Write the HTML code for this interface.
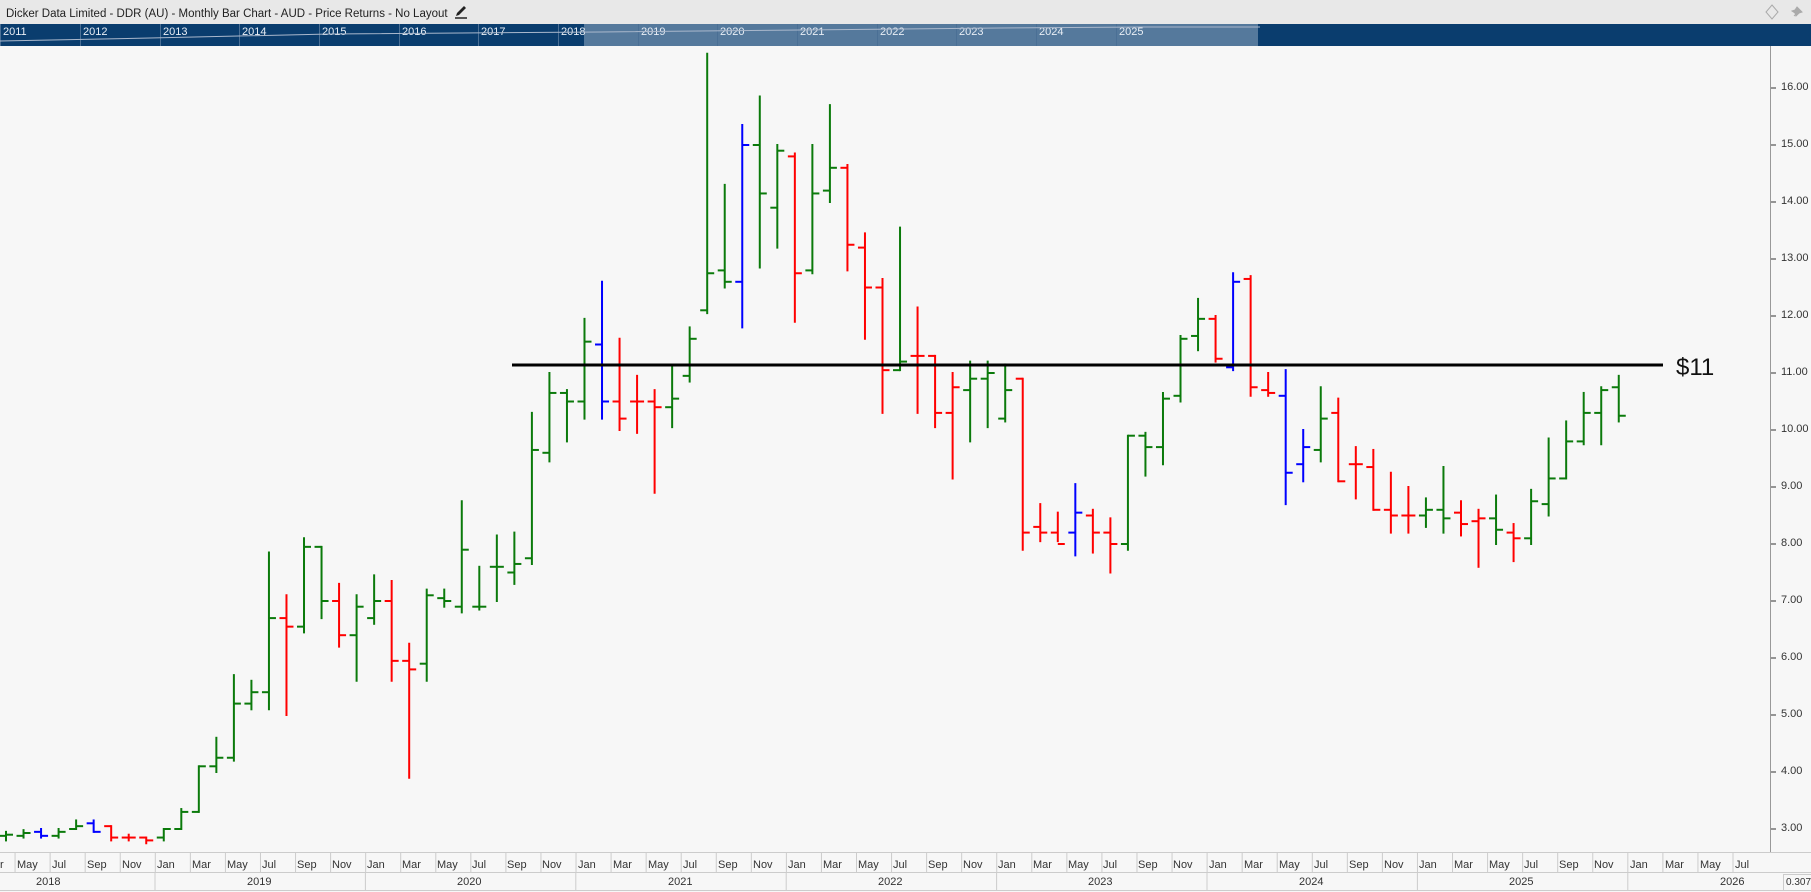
<!DOCTYPE html>
<html><head><meta charset="utf-8"><style>
body{margin:0;width:1811px;height:892px;overflow:hidden;background:#f7f7f7;font-family:"Liberation Sans",sans-serif;}
#title{position:absolute;left:0;top:0;width:1811px;height:24px;background:#e8e8e8;font-size:11.5px;color:#222;}
#title span{position:absolute;left:6px;top:5px;}
#nav{position:absolute;left:0;top:24px;width:1811px;height:22px;background:#0a3d6e;overflow:hidden}
.ny{position:absolute;top:0;height:22px;border-left:1px solid #4a6f95;color:#e8eef5;font-size:11px;padding-left:2px;line-height:16px}
.lab{position:absolute;font-size:11px;color:#333}
.pl{position:absolute;left:1781px;font-size:11px;color:#333}
</style></head><body>
<div id="title"><span>Dicker Data Limited - DDR (AU) - Monthly Bar Chart - AUD - Price Returns - No Layout &nbsp;<svg width="14" height="14" viewBox="0 0 14 14" style="vertical-align:-2px"><path d="M2 11 L3 8 L10 1 L12 3 L5 10 Z" fill="#222"/><path d="M1 13 H13" stroke="#222" stroke-width="1.5"/></svg></span>
<svg style="position:absolute;left:1764px;top:4px" width="44" height="16"><path d="M8 1 L14 8 L8 15 L2 8 Z" fill="none" stroke="#aaa"/><path d="M30 12 L34 8 M33 3 L38 8 L35 9 L32 12 L31 9 L28 7 L31 6 Z" fill="#aaa" stroke="#aaa"/></svg></div>
<div id="nav">
<div style="position:absolute;left:584px;top:0;width:674px;height:22px;background:#55799c"></div>
<div class="ny" style="left:0">2011</div><div class="ny" style="left:80px">2012</div><div class="ny" style="left:160px">2013</div><div class="ny" style="left:239px">2014</div><div class="ny" style="left:319px">2015</div><div class="ny" style="left:399px">2016</div><div class="ny" style="left:478px">2017</div><div class="ny" style="left:558px">2018</div><div class="ny" style="left:638px">2019</div><div class="ny" style="left:717px">2020</div><div class="ny" style="left:797px">2021</div><div class="ny" style="left:877px">2022</div><div class="ny" style="left:956px">2023</div><div class="ny" style="left:1036px">2024</div><div class="ny" style="left:1116px">2025</div>
<svg style="position:absolute;left:0;top:0" width="1260" height="22"><polyline points="0,17 150,14 330,10 600,8 800,6 1000,4 1150,3 1260,3" fill="none" stroke="#aab8cc" stroke-width="1"/></svg>
</div>
<svg id="ch" style="position:absolute;left:0;top:0" width="1811" height="892"></svg>
<div style="position:absolute;left:1770px;top:46px;width:1px;height:806px;background:#999"></div>
<div style="position:absolute;left:0;top:852px;width:1770px;height:1px;background:#ccc"></div>
<div style="position:absolute;left:0;top:872px;width:1811px;height:1px;background:#ccc"></div>
<div style="position:absolute;left:0;top:890px;width:1811px;height:1px;background:#ccc"></div>
<div style="position:absolute;left:1770px;top:852px;width:41px;height:1px;background:#ccc"></div>
<div style="position:absolute;left:1783px;top:874px;width:30px;height:15px;border:1px solid #ccc;font-size:10px;color:#333;line-height:15px;padding-left:2px">0.307</div>
<div class="pl" style="top:81px">16.00</div><div class="pl" style="top:138px">15.00</div><div class="pl" style="top:195px">14.00</div><div class="pl" style="top:252px">13.00</div><div class="pl" style="top:309px">12.00</div><div class="pl" style="top:366px">11.00</div><div class="pl" style="top:423px">10.00</div><div class="pl" style="top:480px">9.00</div><div class="pl" style="top:537px">8.00</div><div class="pl" style="top:594px">7.00</div><div class="pl" style="top:651px">6.00</div><div class="pl" style="top:708px">5.00</div><div class="pl" style="top:765px">4.00</div><div class="pl" style="top:822px">3.00</div>
<div class="lab" style="left:1676px;top:354px;font-size:24px;color:#111">$11</div>
<div class="lab" style="top:859px;left:0">r</div>
<div class="lab" style="top:859px;left:17px">May</div><div class="lab" style="top:859px;left:52px">Jul</div><div class="lab" style="top:859px;left:87px">Sep</div><div class="lab" style="top:859px;left:122px">Nov</div>
<div class="lab" style="top:859px;left:157px">Jan</div><div class="lab" style="top:859px;left:192px">Mar</div><div class="lab" style="top:859px;left:227px">May</div><div class="lab" style="top:859px;left:262px">Jul</div><div class="lab" style="top:859px;left:297px">Sep</div><div class="lab" style="top:859px;left:332px">Nov</div>
<div class="lab" style="top:859px;left:367px">Jan</div><div class="lab" style="top:859px;left:402px">Mar</div><div class="lab" style="top:859px;left:437px">May</div><div class="lab" style="top:859px;left:472px">Jul</div><div class="lab" style="top:859px;left:507px">Sep</div><div class="lab" style="top:859px;left:542px">Nov</div>
<div class="lab" style="top:859px;left:578px">Jan</div><div class="lab" style="top:859px;left:613px">Mar</div><div class="lab" style="top:859px;left:648px">May</div><div class="lab" style="top:859px;left:683px">Jul</div><div class="lab" style="top:859px;left:718px">Sep</div><div class="lab" style="top:859px;left:753px">Nov</div>
<div class="lab" style="top:859px;left:788px">Jan</div><div class="lab" style="top:859px;left:823px">Mar</div><div class="lab" style="top:859px;left:858px">May</div><div class="lab" style="top:859px;left:893px">Jul</div><div class="lab" style="top:859px;left:928px">Sep</div><div class="lab" style="top:859px;left:963px">Nov</div>
<div class="lab" style="top:859px;left:998px">Jan</div><div class="lab" style="top:859px;left:1033px">Mar</div><div class="lab" style="top:859px;left:1068px">May</div><div class="lab" style="top:859px;left:1103px">Jul</div><div class="lab" style="top:859px;left:1138px">Sep</div><div class="lab" style="top:859px;left:1173px">Nov</div>
<div class="lab" style="top:859px;left:1209px">Jan</div><div class="lab" style="top:859px;left:1244px">Mar</div><div class="lab" style="top:859px;left:1279px">May</div><div class="lab" style="top:859px;left:1314px">Jul</div><div class="lab" style="top:859px;left:1349px">Sep</div><div class="lab" style="top:859px;left:1384px">Nov</div>
<div class="lab" style="top:859px;left:1419px">Jan</div><div class="lab" style="top:859px;left:1454px">Mar</div><div class="lab" style="top:859px;left:1489px">May</div><div class="lab" style="top:859px;left:1524px">Jul</div><div class="lab" style="top:859px;left:1559px">Sep</div><div class="lab" style="top:859px;left:1594px">Nov</div>
<div class="lab" style="top:859px;left:1630px">Jan</div><div class="lab" style="top:859px;left:1665px">Mar</div><div class="lab" style="top:859px;left:1700px">May</div><div class="lab" style="top:859px;left:1735px">Jul</div>
<div class="lab" style="top:876px;left:36px">2018</div><div class="lab" style="top:876px;left:247px">2019</div><div class="lab" style="top:876px;left:457px">2020</div><div class="lab" style="top:876px;left:668px">2021</div><div class="lab" style="top:876px;left:878px">2022</div><div class="lab" style="top:876px;left:1088px">2023</div><div class="lab" style="top:876px;left:1299px">2024</div><div class="lab" style="top:876px;left:1509px">2025</div><div class="lab" style="top:876px;left:1720px">2026</div>
<script>
var d=[
[2.88,2.95,2.8,2.9,'g'],[2.88,2.98,2.85,2.93,'g'],[2.95,3.0,2.85,2.88,'b'],[2.88,3.0,2.85,2.95,'g'],[3.0,3.15,3.0,3.05,'g'],[3.1,3.15,2.95,2.95,'b'],[3.05,3.05,2.8,2.85,'r'],[2.85,2.9,2.8,2.85,'r'],[2.85,2.85,2.75,2.8,'r'],
[2.85,3.0,2.8,3.0,'g'],[3.0,3.35,3.0,3.3,'g'],[3.3,4.1,3.3,4.1,'g'],[4.1,4.6,4.0,4.25,'g'],[4.25,5.7,4.2,5.2,'g'],[5.2,5.6,5.1,5.4,'g'],[5.4,7.85,5.1,6.7,'g'],[6.7,7.1,5.0,6.55,'r'],[6.55,8.1,6.45,7.95,'g'],[7.95,7.95,6.7,7.0,'g'],[7.0,7.3,6.2,6.4,'r'],[6.4,7.1,5.6,6.9,'g'],
[6.7,7.45,6.6,7.0,'g'],[7.0,7.35,5.6,5.95,'r'],[5.95,6.25,3.9,5.8,'r'],[5.9,7.2,5.6,7.1,'g'],[7.05,7.2,6.9,7.0,'g'],[6.9,8.75,6.8,7.9,'g'],[6.9,7.6,6.85,6.9,'g'],[7.6,8.15,7.0,7.6,'g'],[7.5,8.2,7.3,7.65,'g'],[7.75,10.3,7.65,9.65,'g'],[9.6,11.0,9.45,10.65,'g'],[10.65,10.7,9.8,10.5,'g'],
[10.5,11.95,10.2,11.55,'g'],[11.5,12.6,10.2,10.5,'b'],[10.5,11.6,10.0,10.2,'r'],[10.5,10.95,9.95,10.5,'r'],[10.5,10.7,8.9,10.4,'r'],[10.4,11.15,10.05,10.55,'g'],[10.95,11.8,10.85,11.6,'g'],[12.1,16.6,12.05,12.75,'g'],[12.8,14.3,12.5,12.6,'g'],[12.6,15.35,11.8,15.0,'b'],[15.0,15.85,12.85,14.15,'g'],[13.9,15.0,13.2,14.9,'g'],
[14.8,14.85,11.9,12.75,'r'],[12.8,15.0,12.75,14.15,'g'],[14.2,15.7,14.0,14.6,'g'],[14.6,14.65,12.8,13.25,'r'],[13.2,13.45,11.6,12.5,'r'],[12.5,12.65,10.3,11.05,'r'],[11.05,13.55,11.05,11.2,'g'],[11.3,12.15,10.3,11.3,'r'],[11.3,11.3,10.05,10.3,'r'],[10.3,11.0,9.15,10.75,'r'],[10.7,11.2,9.8,10.9,'g'],[10.9,11.2,10.05,11.0,'g'],
[10.2,11.15,10.15,10.7,'g'],[10.9,10.9,7.9,8.2,'r'],[8.3,8.7,8.05,8.2,'r'],[8.2,8.55,8.05,8.0,'r'],[8.2,9.05,7.8,8.55,'b'],[8.5,8.6,7.85,8.2,'r'],[8.2,8.45,7.5,8.0,'r'],[8.0,9.9,7.9,9.9,'g'],[9.9,9.95,9.2,9.7,'g'],[9.7,10.65,9.4,10.55,'g'],[10.6,11.65,10.5,11.6,'g'],[11.65,12.3,11.4,11.95,'g'],
[11.95,12.0,11.2,11.25,'r'],[11.1,12.75,11.05,12.6,'b'],[12.65,12.7,10.6,10.75,'r'],[10.7,11.0,10.6,10.65,'r'],[10.6,11.05,8.7,9.25,'b'],[9.4,10.0,9.1,9.7,'b'],[9.65,10.75,9.45,10.2,'g'],[10.3,10.55,9.1,9.1,'r'],[9.4,9.7,8.8,9.4,'r'],[9.35,9.65,8.6,8.6,'r'],[8.6,9.25,8.2,8.5,'r'],[8.5,9.0,8.2,8.5,'r'],
[8.5,8.8,8.3,8.6,'g'],[8.6,9.35,8.2,8.45,'g'],[8.55,8.75,8.15,8.35,'r'],[8.4,8.6,7.6,8.45,'r'],[8.45,8.85,8.0,8.25,'g'],[8.2,8.35,7.7,8.1,'r'],[8.1,8.95,8.0,8.75,'g'],[8.7,9.85,8.5,9.15,'g'],[9.15,10.15,9.15,9.8,'g'],[9.8,10.65,9.75,10.3,'g'],[10.3,10.75,9.75,10.7,'g'],[10.75,10.95,10.15,10.25,'g']];
var col={g:'#0b7a0b',r:'#ff0000',b:'#0000ff'};
function Y(p){return 829-(p-3)*57.0;}
var s='';
d.forEach(function(b,i){var m=3+i;var x=155+(m-12)*17.53+8.77;var c=col[b[4]];
s+='<line x1="'+x+'" x2="'+x+'" y1="'+(Y(b[1])-1)+'" y2="'+(Y(b[2])+1)+'" stroke="'+c+'" stroke-width="2"/>';
s+='<line x1="'+(x-7)+'" x2="'+x+'" y1="'+Y(b[0])+'" y2="'+Y(b[0])+'" stroke="'+c+'" stroke-width="2"/>';
s+='<line x1="'+x+'" x2="'+(x+7)+'" y1="'+Y(b[3])+'" y2="'+Y(b[3])+'" stroke="'+c+'" stroke-width="2"/>';});
s+='<line x1="512" x2="1663" y1="365" y2="365" stroke="#000" stroke-width="3"/>';
for(var p=3;p<=16;p++){s+='<line x1="1770" x2="1776" y1="'+Y(p)+'" y2="'+Y(p)+'" stroke="#333"/>';}
for(var k=0;k<51;k++){var x=-20+k*35.06;s+='<line x1="'+x+'" x2="'+x+'" y1="852" y2="872" stroke="#ccc"/>';}
for(var y=0;y<8;y++){var x=155+y*210.4;s+='<line x1="'+x+'" x2="'+x+'" y1="872" y2="890" stroke="#ccc"/>';}
document.getElementById('ch').innerHTML=s;
</script>
</body></html>
